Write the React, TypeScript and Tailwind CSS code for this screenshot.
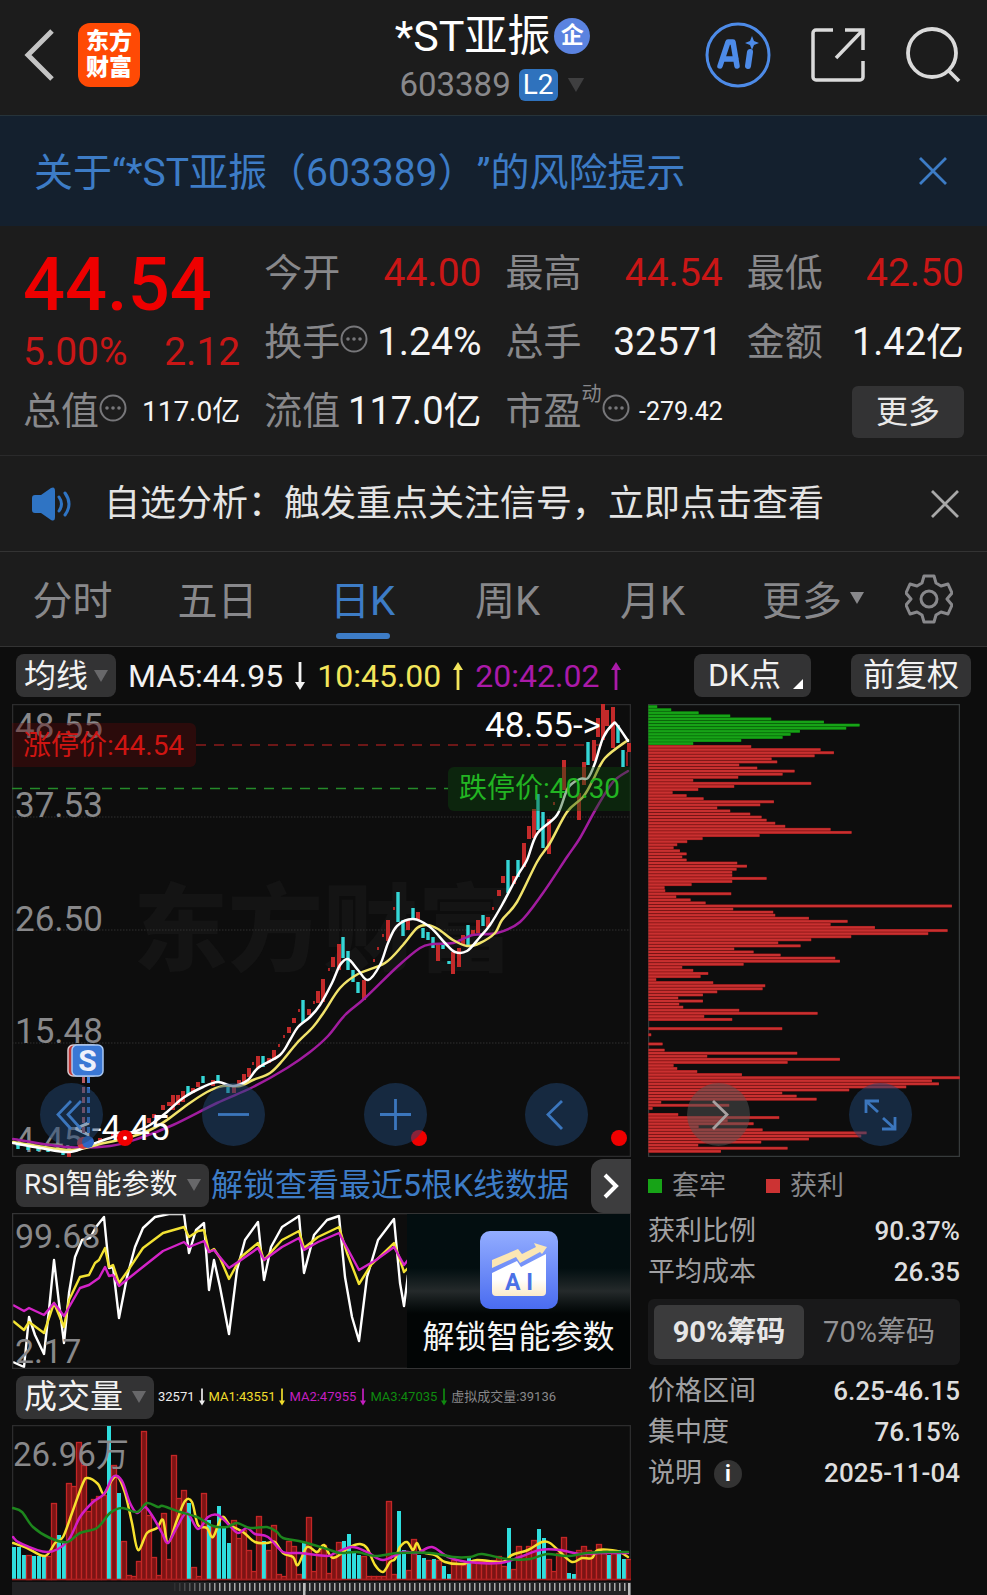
import type { ReactNode } from "react";

type Point = [number, number];

// [x, top, bottom] of every candle, split by direction
const risingCandles = [
  [57, 448, 453], [76, 439, 444], [88, 434, 440], [101, 429, 434], [137, 414, 419], [142, 410, 414],
  [151, 401, 406], [157, 398, 402], [161, 391, 406], [166, 391, 401], [171, 387, 398], [181, 384, 389],
  [186, 378, 383], [201, 376, 382], [222, 383, 389], [227, 376, 382], [232, 370, 381], [237, 364, 373],
  [246, 352, 364], [257, 354, 359], [262, 346, 356], [277, 323, 329], [282, 314, 319], [297, 305, 311],
  [306, 287, 299], [311, 275, 298], [321, 253, 263], [327, 240, 266], [352, 276, 296], [376, 216, 237],
  [396, 216, 226], [406, 208, 216], [426, 239, 257], [441, 248, 270], [447, 244, 263], [451, 231, 241],
  [461, 226, 231], [466, 216, 229], [476, 213, 223], [487, 186, 192], [491, 172, 179], [502, 172, 180],
  [512, 139, 163], [517, 122, 135], [522, 105, 134], [537, 115, 150], [552, 56, 86], [567, 89, 116],
  [572, 58, 81], [582, 36, 57], [586, 14, 33], [591, 0, 36], [595, 6, 22], [601, 3, 44], [617, 39, 48],
];

const fallingCandles = [
  [6, 440, 445], [16, 441, 446], [26, 443, 447], [36, 445, 448], [51, 447, 451], [176, 382, 391],
  [191, 372, 379], [206, 371, 379], [216, 381, 389], [251, 352, 363], [291, 296, 319], [331, 233, 254],
  [336, 247, 266], [341, 266, 278], [346, 278, 289], [386, 188, 218], [391, 216, 232], [401, 204, 216],
  [411, 224, 234], [416, 228, 236], [421, 233, 244], [431, 240, 245], [437, 257, 260], [456, 221, 241],
  [471, 211, 222], [496, 156, 189], [506, 156, 173], [526, 90, 126], [531, 108, 144], [576, 38, 61],
  [606, 21, 39], [611, 46, 63],
];

// one-price days show up as dots
const limitDays: Point[] = [
  [241, 358], [267, 340], [272, 331], [287, 305], [302, 297], [317, 264], [362, 255], [366, 243], [371, 230], [382, 203], [481, 203], [542, 98],
];

const priceMa5: Point[] = [
  [1, 439], [28, 444], [58, 448], [78, 441], [101, 433], [121, 428], [138, 421], [155, 408], [171, 394], [191, 383],
  [206, 378], [221, 382], [236, 376], [246, 364], [268, 351], [278, 336], [286, 323], [298, 313], [308, 301], [320, 279],
  [328, 261], [336, 255], [346, 266], [356, 276], [368, 261], [376, 239], [385, 222], [401, 215], [418, 223], [433, 239],
  [443, 248], [455, 247], [468, 233], [478, 221], [490, 201], [506, 171], [515, 156], [525, 130], [545, 111], [556, 84],
  [568, 75], [576, 74], [583, 59], [591, 34], [601, 20], [605, 21], [616, 37],
];

const priceMa10: Point[] = [
  [1, 438], [58, 446], [88, 440], [115, 434], [138, 426], [155, 416], [175, 401], [195, 388], [211, 382], [228, 382],
  [241, 376], [258, 369], [271, 356], [285, 339], [301, 323], [312, 308], [328, 284], [346, 270], [373, 259], [391, 241],
  [405, 224], [415, 221], [426, 225], [441, 236], [455, 242], [468, 239], [483, 229], [490, 216], [505, 198], [525, 158],
  [538, 139], [555, 108], [571, 93], [581, 76], [593, 54], [616, 36],
];

const priceMa20: Point[] = [
  [1, 435], [55, 443], [98, 442], [128, 434], [161, 421], [205, 399], [241, 383], [275, 364], [298, 348], [316, 332],
  [333, 311], [353, 294], [385, 263], [408, 244], [421, 240], [441, 239], [461, 231], [485, 229], [508, 218], [531, 189],
  [555, 153], [568, 134], [585, 103], [601, 78], [616, 67],
];

const rsiFast: Point[] = [
  [1, 149], [12, 154], [17, 104], [23, 122], [32, 141], [37, 97], [42, 47], [47, 90], [52, 130], [57, 80], [63, 44],
  [70, 27], [78, 25], [84, 14], [92, 4], [97, 55], [101, 54], [107, 105], [115, 64], [123, 34], [131, 15], [143, 4],
  [157, 1], [172, 1], [177, 40], [184, 17], [192, 10], [197, 77], [202, 47], [208, 74], [217, 121], [225, 57], [233, 27],
  [246, 9], [252, 67], [259, 34], [270, 14], [287, 3], [292, 60], [302, 22], [315, 7], [327, 3], [333, 64], [340, 104],
  [347, 128], [355, 64], [366, 27], [382, 6], [388, 70], [392, 93], [396, 62],
];

const rsiMid: Point[] = [
  [1, 108], [12, 117], [17, 109], [32, 120], [42, 90], [52, 114], [57, 87], [68, 64], [77, 62], [83, 50], [87, 47],
  [93, 35], [97, 54], [101, 52], [107, 70], [115, 59], [131, 35], [151, 20], [172, 14], [177, 24], [186, 18], [192, 17],
  [197, 39], [202, 36], [208, 45], [217, 66], [229, 44], [246, 30], [252, 47], [270, 27], [287, 18], [292, 35], [306, 24],
  [327, 14], [335, 40], [347, 71], [359, 52], [382, 30], [388, 47], [392, 59], [396, 55],
];

const rsiSlow: Point[] = [
  [1, 92], [12, 98], [17, 95], [32, 102], [42, 90], [52, 103], [68, 75], [77, 72], [87, 65], [93, 54], [97, 63], [101, 62],
  [107, 73], [127, 57], [151, 38], [172, 29], [177, 34], [192, 28], [197, 39], [202, 37], [217, 55], [229, 47], [246, 35],
  [252, 47], [270, 34], [287, 25], [292, 37], [306, 29], [327, 20], [347, 57], [364, 47], [382, 34], [392, 52], [396, 47],
];

// bar heights, negative on a falling day
const volumes = [
  -32, -32, -24, 24, -23, -23, -23, 23, 76, -44, -38, 96, 93, 137, 114, 68, 80, 83, 84, -153, 114, -86, 38, 4, 3,
  18, 148, 64, 22, 4, 66, 20, 124, 81, 89, -76, 12, 3, 86, -59, 53, -73, -51, -36, 59, 41, 49, 29, 8, 63,
  -38, 29, 54, 5, 3, 38, 33, 5, -36, 62, 8, 28, 34, 6, 23, 37, -38, -45, -28, -24, 23, 3, 3, 3, 3,
  78, 5, -68, -29, 9, 40, -24, -21, 19, -20, 19, -13, -5, 19, 16, 14, -21, 18, 18, 18, 18, 19, 23, 13, -51,
  10, 33, 24, 33, 39, -50, -41, 20, 8, 26, 42, -6, -5, 29, 33, 29, 28, 35, 28, -24, 26, -29, -20, 20,
];

const volumeMa1: Point[] = [
  [1, 118], [15, 123], [33, 131], [43, 118], [51, 112], [60, 88], [71, 58], [76, 53], [86, 59], [92, 69], [100, 55],
  [106, 52], [113, 68], [120, 98], [126, 125], [135, 108], [145, 103], [151, 95], [156, 118], [165, 95], [173, 76],
  [180, 77], [186, 100], [195, 103], [201, 112], [210, 92], [218, 100], [231, 107], [243, 117], [255, 118], [263, 117],
  [271, 128], [281, 132], [286, 140], [295, 122], [305, 127], [312, 120], [321, 133], [338, 122], [348, 119], [355, 123],
  [363, 140], [371, 147], [378, 137], [383, 134], [388, 122], [395, 117], [401, 125], [405, 118], [410, 127], [423, 130],
  [433, 137], [451, 139], [465, 135], [490, 137], [500, 130], [516, 125], [530, 117], [538, 118], [548, 127], [560, 137],
  [570, 133], [580, 133], [586, 125], [605, 126], [616, 132],
];

const volumeMa2: Point[] = [
  [1, 112], [8, 118], [35, 127], [55, 117], [68, 92], [81, 77], [92, 69], [100, 53], [105, 51], [111, 58], [118, 78],
  [125, 88], [133, 82], [141, 92], [150, 108], [156, 118], [165, 102], [175, 88], [186, 104], [196, 92], [206, 90],
  [218, 101], [226, 108], [235, 103], [243, 109], [256, 112], [271, 127], [288, 128], [315, 131], [323, 128], [340, 122],
  [355, 127], [371, 135], [391, 127], [405, 128], [420, 122], [436, 132], [455, 137], [488, 138], [508, 132], [528, 125],
  [548, 125], [568, 129], [588, 128], [616, 128],
];

const volumeMa3: Point[] = [
  [1, 83], [10, 87], [21, 102], [38, 113], [55, 117], [68, 108], [85, 103], [98, 88], [110, 83], [125, 87], [135, 78],
  [146, 82], [151, 81], [168, 87], [185, 92], [201, 101], [215, 102], [225, 98], [238, 103], [255, 102], [265, 107],
  [271, 113], [291, 117], [315, 124], [328, 128], [345, 127], [363, 131], [386, 128], [418, 128], [441, 132], [458, 132],
  [470, 129], [495, 134], [518, 134], [535, 129], [555, 131], [575, 128], [595, 127], [616, 127],
];

// chip distribution from the highest price down, in thirds of a pixel
const trappedChips = [26, 68, 150, 245, 368, 526, 633, 593, 454, 426, 402, 278, 134];

const profitChips = [
  308, 516, 556, 498, 369, 386, 272, 326, 438, 402, 269, 134, 488, 257, 149, 72, 114, 165, 376, 335, 206, 245, 305, 339,
  354, 380, 410, 546, 609, 333, 162, 116, 86, 75, 94, 114, 101, 114, 266, 295, 264, 251, 251, 354, 251, 129, 48, 50,
  248, 83, 126, 171, 910, 254, 374, 380, 481, 597, 546, 679, 897, 839, 608, 488, 389, 456, 257, 315, 396, 560, 574, 285,
  101, 134, 179, 156, 23, 194, 350, 342, 206, 163, 89, 163, 92, 104, 272, 507, 167, 251, 0, 0, 401, 0, 8, 0, 0, 42, 0,
  48, 446, 176, 574, 417, 75, 86, 146, 280, 934, 850, 871, 773, 602, 401, 444, 504, 38, 242, 12, 0, 89, 392, 237, 315,
  150, 342, 654, 638, 481, 338, 149, 417, 217,
];

function smooth(points: Point[]) {
  let d = `M${points[0][0]} ${points[0][1]}`;
  for (let i = 0; i < points.length - 1; i++) {
    const p0 = points[i - 1] ?? points[i];
    const p1 = points[i];
    const p2 = points[i + 1];
    const p3 = points[i + 2] ?? p2;
    d += `C${p1[0] + (p2[0] - p0[0]) / 6} ${p1[1] + (p2[1] - p0[1]) / 6} ${p2[0] - (p3[0] - p1[0]) / 6} ${p2[1] - (p3[1] - p1[1]) / 6} ${p2[0]} ${p2[1]}`;
  }
  return d;
}

function Curve({ points, color }: { points: Point[]; color: string }) {
  return <path d={smooth(points)} fill="none" stroke={color} strokeWidth="2.5" strokeLinecap="round" />;
}

function Line({ points, color }: { points: Point[]; color: string }) {
  return <polyline points={points.join(" ")} fill="none" stroke={color} strokeWidth="2.4" strokeLinejoin="round" />;
}

function Triangle({ className }: { className: string }) {
  return (
    <svg viewBox="0 0 14 12" className={`shrink-0 ${className}`} fill="currentColor" aria-hidden="true">
      <path d="M0 0h14L7 12z" />
    </svg>
  );
}

function CloseIcon({ className }: { className: string }) {
  return (
    <svg viewBox="0 0 28 28" className={className} fill="none" stroke="currentColor" strokeWidth="2.8" aria-hidden="true">
      <path d="M1 1l26 26M27 1L1 27" />
    </svg>
  );
}

function MoreDots() {
  return (
    <svg viewBox="0 0 28 28" className="mb-2 h-7 w-7 shrink-0 text-[#77777a]" aria-hidden="true">
      <circle cx="14" cy="14" r="12.5" fill="none" stroke="currentColor" strokeWidth="2" />
      <g fill="currentColor">
        <circle cx="8" cy="14" r="1.8" />
        <circle cx="14" cy="14" r="1.8" />
        <circle cx="20" cy="14" r="1.8" />
      </g>
    </svg>
  );
}

function Trend({ up = false, className }: { up?: boolean; className: string }) {
  return (
    <svg viewBox="0 0 10 28" className={`shrink-0 ${className}`} fill="currentColor" aria-hidden="true">
      {up ? <path d="M5 0l5 8H6.4v20H3.6V8H0z" /> : <path d="M5 28l5-8H6.4V0H3.6v20H0z" />}
    </svg>
  );
}

function Header() {
  return (
    <header className="grid h-[116px] grid-cols-[1fr_auto_1fr] items-center border-b border-[#26333a] pr-[26px] pl-6">
      <div className="flex items-center gap-6 pb-[6px]">
        <button type="button" aria-label="返回">
          <svg viewBox="0 0 30 52" className="h-[52px] w-[30px]" fill="none" stroke="#c4c4c4" strokeWidth="5" aria-hidden="true">
            <path d="M28 2L4 26l24 24" />
          </svg>
        </button>
        <a href="#home" className="grid h-16 w-[62px] place-content-center rounded-xl bg-[#ff4a05] text-center text-[23px] leading-[26px] font-black text-white">
          <span>东方</span>
          <span>财富</span>
        </a>
      </div>

      <div className="flex flex-col items-center gap-1">
        <h1 className="flex items-center gap-1 text-[43px] leading-[50px] text-white">
          *ST亚振
          <span className="grid h-9 w-9 place-content-center rounded-full bg-[#5b83e0] text-[23px] leading-none font-bold">企</span>
        </h1>
        <div className="flex items-center gap-2 text-[33px] leading-10 text-[#88888b]">
          603389
          <span className="rounded-md bg-[#2f72bd] px-1 text-[28px] leading-8 text-white">L2</span>
          <Triangle className="h-[14px] w-5 text-[#3f3f40]" />
        </div>
      </div>

      <div className="flex items-center justify-end gap-10 pb-[6px]">
        <button type="button" aria-label="AI">
          <svg viewBox="0 0 66 66" className="h-[66px] w-[66px]" fill="none" stroke="#4d8be8" aria-hidden="true">
            <circle cx="33" cy="33" r="31" strokeWidth="3" />
            <path d="M15 44l8-24h5l4 24M19 37h12" strokeWidth="5.5" strokeLinejoin="round" strokeLinecap="round" />
            <path d="M45 30l-2 14" strokeWidth="6" strokeLinecap="round" />
            <path d="M47 14l2 5 5 2-5 2-2 5-2-5-5-2 5-2z" fill="#4d8be8" stroke="none" />
          </svg>
        </button>
        <button type="button" aria-label="分享">
          <svg viewBox="0 0 54 54" className="h-[54px] w-[54px]" fill="none" stroke="#dadada" strokeWidth="3.5" aria-hidden="true">
            <path d="M22 2H5a3 3 0 0 0-3 3v44a3 3 0 0 0 3 3h44a3 3 0 0 0 3-3V33M34 2h18v20M51 3L25 30" />
          </svg>
        </button>
        <button type="button" aria-label="搜索">
          <svg viewBox="0 0 56 56" className="h-14 w-14" fill="none" stroke="#dadada" strokeWidth="3.8" aria-hidden="true">
            <circle cx="27" cy="26" r="24" />
            <path d="M43 43l11 11" />
          </svg>
        </button>
      </div>
    </header>
  );
}

function Quote({ label, value, red = false, icon, size = "text-[39px]" }: { label: ReactNode; value: string; red?: boolean; icon?: ReactNode; size?: string }) {
  return (
    <div className="flex h-[69px] items-center justify-between whitespace-nowrap">
      <dt className="flex items-center text-[38px] text-[#88888b]">
        {label}
        {icon}
      </dt>
      <dd className={`${size} ${red ? "text-[#c91616]" : "text-[#f5f5f5]"}`}>{value}</dd>
    </div>
  );
}

function QuoteBoard() {
  return (
    <section className="border-b border-[#2a2a2b] px-[23px] pt-[13px] pb-[9px]">
      <dl className="grid grid-cols-4 gap-x-6">
        <div className="row-span-2">
          <dt className="pt-2 text-[74px] leading-[76px] font-medium text-[#ee0000]">44.54</dt>
          <dd className="flex justify-between pt-1 text-[39px] leading-[50px] text-[#c91616]">
            <span>5.00%</span>
            <span>2.12</span>
          </dd>
        </div>
        <Quote label="今开" value="44.00" red />
        <Quote label="最高" value="44.54" red />
        <Quote label="最低" value="42.50" red />
        <Quote label="换手" value="1.24%" icon={<MoreDots />} />
        <Quote label="总手" value="32571" />
        <Quote label="金额" value="1.42亿" size="text-[38px]" />
        <Quote label="总值" value="117.0亿" icon={<MoreDots />} size="text-[28px]" />
        <Quote label="流值" value="117.0亿" size="text-[38px]" />
        <Quote label={<>市盈<sup className="top-[-18px] text-[20px] leading-none">动</sup></>} value="-279.42" icon={<MoreDots />} size="text-[25px]" />
        <div className="flex items-center justify-end">
          <button type="button" className="rounded-md bg-[#333334] px-6 text-[32px] leading-[52px] text-[#e8e8e8]">更多</button>
        </div>
      </dl>
    </section>
  );
}

function PeriodTabs() {
  const tabs = ["分时", "五日", "日K", "周K", "月K"];

  return (
    <nav className="grid h-[95px] grid-cols-[repeat(6,minmax(0,1fr))_117px] border-b border-[#333] text-[40px] text-[#88888b]">
      {tabs.map((tab) => (
        <button type="button" key={tab} className={`pt-[6px] ${tab === "日K" ? "relative text-[#3d7cc6]" : ""}`}>
          {tab}
          {tab === "日K" && <span className="absolute bottom-[7px] left-1/2 h-[6px] w-[54px] -translate-x-1/2 rounded-full bg-[#3d7cc6]" />}
        </button>
      ))}
      <button type="button" className="flex items-center justify-end gap-2 pt-[6px] pr-[6px] whitespace-nowrap">
        更多
        <Triangle className="mb-2 h-3 w-[14px]" />
      </button>
      <button type="button" aria-label="设置" className="grid place-content-center">
        <svg viewBox="0 0 48 50" className="h-[50px] w-12" fill="none" stroke="#88888b" strokeWidth="3" strokeLinejoin="round" aria-hidden="true">
          <path d="M19 2h10l2 7 5 3 7-2 4 9-5 6 5 6-4 9-7-2-5 3-2 7H19l-2-7-5-3-7 2-4-9 5-6-5-6 4-9 7 2 5-3z" />
          <circle cx="24" cy="25" r="8" />
        </svg>
      </button>
    </nav>
  );
}

function Picker({ label, value, className }: { label: string; value: string; className: string }) {
  return (
    <label className="relative flex shrink-0 items-center">
      <select aria-label={label} className={`h-[43px] appearance-none rounded-lg bg-[#333334] pl-2 leading-[40px] text-[#f2f2f2] ${className}`}>
        <option>{value}</option>
      </select>
      <Triangle className="pointer-events-none absolute right-2 h-3 w-[14px] text-[#68686a]" />
    </label>
  );
}

function ChartToolbar() {
  return (
    <div className="flex h-[57px] items-center gap-3 px-4 text-[32px] whitespace-nowrap">
      <Picker label="主图指标" value="均线" className="pr-[27px] text-[32px]" />
      <span className="flex items-center gap-3 text-[#f2f2f2]">MA5:44.95<Trend className="h-7 w-[10px]" /></span>
      <span className="flex items-center gap-3 text-[#f3e55b]">10:45.00<Trend up className="h-7 w-[10px]" /></span>
      <span className="flex items-center gap-3 text-[#aa1aa8]">20:42.02<Trend up className="h-7 w-[10px]" /></span>
      <div className="ml-auto flex gap-10 text-[#f2f2f2]">
        <button type="button" className="flex items-end rounded-lg bg-[#333334] pr-2 pl-[14px] leading-[43px]">
          DK点
          <svg viewBox="0 0 10 10" className="mb-2 ml-3 h-[10px] w-[10px]" fill="#fff" aria-hidden="true"><path d="M10 0v10H0z" /></svg>
        </button>
        <button type="button" className="rounded-lg bg-[#333334] px-3 leading-[43px]">前复权</button>
      </div>
    </div>
  );
}

function PriceChart() {
  return (
    <svg viewBox="0 0 619 453" className="block h-auto w-full" role="img" aria-label="日K">
      <text x="121" y="260" className="text-[95px] font-black" fill="#141414">东方财富</text>
      <rect x="0.5" y="0.5" width="618" height="452" fill="none" stroke="#2c2c2d" strokeWidth="1.5" />
      {[113, 226, 339].map((y) => <path key={y} d={`M0 ${y}H619`} stroke="#303031" strokeDasharray="1.5 1.5" />)}

      <g className="text-[35px]" fill="#88888a">
        <text x="3" y="34">48.55</text>
        <text x="3" y="113">37.53</text>
        <text x="3" y="227">26.50</text>
        <text x="3" y="339">15.48</text>
        <text x="3" y="448">4.45</text>
      </g>

      <path d="M184 41H590" stroke="#8c1b1b" strokeWidth="1.6" strokeDasharray="10 8" />
      <path d="M0 84.5H436" stroke="#258a2a" strokeWidth="1.6" strokeDasharray="10 8" />

      {risingCandles.map(([x, top, bottom]) => <rect key={x} x={x - 2} y={top} width="4" height={bottom - top} fill="#c32a2a" />)}
      {fallingCandles.map(([x, top, bottom]) => <rect key={x} x={x - 1.7} y={top} width="3.4" height={bottom - top} fill="#35d6d6" />)}
      {limitDays.map(([x, y]) => <rect key={x} x={x - 1} y={y} width="2" height="3" fill="#b02626" />)}
      <path d="M615 48V62" stroke="#8c1b1b" strokeWidth="2" />

      <Curve points={priceMa20} color="#a11c9f" />
      <Curve points={priceMa10} color="#f1e36b" />
      <Curve points={priceMa5} color="#ffffff" />

      <path d="M0 19H178a6 6 0 0 1 6 6V57a6 6 0 0 1-6 6H0z" fill="#5a0a0a" fillOpacity="0.4" />
      <text x="11" y="51" className="text-[28px]" fill="#cf1512">涨停价:44.54</text>
      <path d="M619 63H442a6 6 0 0 0-6 6v32a6 6 0 0 0 6 6H619z" fill="#0c4a10" fillOpacity="0.4" />
      <text x="447" y="94" className="text-[28px]" fill="#22b522">跌停价:40.30</text>

      <text x="473" y="33" className="text-[35px]" fill="#fff">48.55-&gt;</text>
      <text x="62" y="436" className="text-[35px]" fill="#fff">&lt;-4.45</text>

      <path d="M71.5 373V434" stroke="#b85c60" strokeWidth="3" strokeDasharray="6 4" />
      <path d="M76.5 373V434" stroke="#3f7fd8" strokeWidth="3" strokeDasharray="6 4" />
      <circle cx="71" cy="439" r="6" fill="#d43a3a" />
      <circle cx="76" cy="438" r="6" fill="#2f66c4" />
      <rect x="56" y="341" width="30" height="31" rx="5" fill="#c23634" stroke="#d9c9cf" strokeWidth="1.5" />
      <rect x="60" y="341" width="31" height="31" rx="5" fill="#3a77d4" stroke="#a9c8f2" strokeWidth="1.5" />
      <text x="75.5" y="367" textAnchor="middle" className="text-[30px] font-bold" fill="#eef0fb">S</text>

      <circle cx="113" cy="434" r="8" fill="#f00000" />
      <circle cx="113" cy="434" r="2" fill="#fff" />
      <circle cx="407" cy="434" r="8" fill="#f00000" />
      <circle cx="607" cy="434" r="8" fill="#f00000" />
    </svg>
  );
}

function ChipChart() {
  const pitch = 3.066;
  const all = [...trappedChips, ...profitChips];

  return (
    <svg viewBox="0 0 312 453" className="block h-auto w-full" role="img" aria-label="筹码">
      <rect x="0.5" y="0.5" width="311" height="452" fill="none" stroke="#363a3b" strokeWidth="1.5" />
      {all.map((length, i) => {
        const trapped = i < trappedChips.length;
        const y = 1.2 + i * pitch;
        return (
          <g key={i}>
            <rect x="0.5" y={y} width={length / 3} height={pitch} fill={trapped ? "#0b7a0b" : "#8f1717"} />
            <rect x="0.5" y={y + 0.4} width={length / 3} height="2.2" fill={trapped ? "#17a317" : "#c93030"} />
          </g>
        );
      })}
    </svg>
  );
}

function RoundButton({ label, muted = false, children }: { label: string; muted?: boolean; children: ReactNode }) {
  return (
    <button type="button" aria-label={label} className={`h-[63px] w-[63px] rounded-full ${muted ? "bg-[#555]/50 text-[#a8a0a0]" : "bg-[#1f4674]/50 text-[#3b76bd]"}`}>
      <svg viewBox="0 0 63 63" className="h-full w-full" fill="none" stroke="currentColor" strokeWidth="2.8" aria-hidden="true">{children}</svg>
    </button>
  );
}

function ChartControls() {
  return (
    <div className="absolute right-12 bottom-[11px] left-7 flex justify-between">
      <RoundButton label="最早"><path d="M31 18L18 31.5 31 46M41 18L28 31.5 41 46" /></RoundButton>
      <RoundButton label="缩小"><path d="M16 31.5H47" /></RoundButton>
      <RoundButton label="放大"><path d="M16 31.5H47M31.5 16V47" /></RoundButton>
      <RoundButton label="向左"><path d="M37 18L23 31.5 37 46" /></RoundButton>
      <RoundButton label="向右" muted><path d="M26 18L40 31.5 26 46" /></RoundButton>
      <RoundButton label="全屏"><path d="M17 30V18H30M18 19L29 29M46 34V46H33M34 35L45 45" /></RoundButton>
    </div>
  );
}

function RsiPanel() {
  return (
    <>
      <div className="flex h-14 items-center justify-between pl-1 whitespace-nowrap">
        <Picker label="副图指标" value="RSI智能参数" className="pr-[31px] text-[28px]" />
        <a href="#unlock" className="mr-auto ml-[2px] text-[32px] text-[#3d7cc6]">解锁查看最近5根K线数据</a>
        <button type="button" aria-label="展开" className="grid h-[54px] w-10 place-content-center self-end rounded-l-xl bg-[#3d3d3e]">
          <svg viewBox="0 0 16 26" className="h-[26px] w-4" fill="none" stroke="#fff" strokeWidth="4" aria-hidden="true"><path d="M2 2l11 11L2 24" /></svg>
        </button>
      </div>
      <div className="relative">
        <svg viewBox="0 0 619 156" className="block h-auto w-full" role="img" aria-label="RSI">
          <Line points={rsiFast} color="#ffffff" />
          <Line points={rsiMid} color="#f2e233" />
          <Line points={rsiSlow} color="#d423c8" />
          <text x="3" y="35" className="text-[34px]" fill="#88888a">99.68</text>
          <text x="3" y="150" className="text-[34px]" fill="#88888a">2.17</text>
          <rect x="0.5" y="0.5" width="618" height="155" fill="none" stroke="#343435" strokeWidth="1.5" />
        </svg>
        <button type="button" className="absolute inset-y-[1px] right-[1px] flex w-[36%] flex-col items-center justify-center gap-[6px] bg-linear-to-b from-[#030e10] from-35% via-[#252a2b] via-50% to-[#020505] to-65% pt-2 text-[32px] leading-[44px] whitespace-nowrap text-[#f5f5f5]">
          <svg viewBox="0 0 78 78" className="h-[78px] w-[78px]" aria-hidden="true">
            <defs>
              <linearGradient id="badge" x1="0" y1="0" x2="0" y2="1">
                <stop offset="0" stopColor="#93adff" />
                <stop offset="1" stopColor="#4a6cf0" />
              </linearGradient>
              <linearGradient id="card" x1="0" y1="0" x2="0" y2="1">
                <stop offset="0.6" stopColor="#fff" />
                <stop offset="1" stopColor="#fdebc9" />
              </linearGradient>
            </defs>
            <rect width="78" height="78" rx="10" fill="url(#badge)" />
            <path d="M12 42l25-12 4 6 25-13v38a4 4 0 0 1-4 4H16a4 4 0 0 1-4-4z" fill="url(#card)" />
            <path d="M12 29l26-11 4 5 14-7-2-4 13 4-5 7-2-2-20 11-4-6-24 11z" fill="#fbe6b4" />
            <text x="39" y="59" textAnchor="middle" className="text-[23px] font-bold" fill="#4b70e6">A I</text>
          </svg>
          解锁智能参数
        </button>
      </div>
    </>
  );
}

function VolumePanel() {
  return (
    <>
      <div className="flex h-14 items-center gap-1 pl-1 text-[13px] whitespace-nowrap">
        <Picker label="成交量指标" value="成交量" className="pr-[31px] text-[33px]" />
        <span className="flex items-center gap-1 text-[#ededed]">32571<Trend className="h-5 w-[6px]" /></span>
        <span className="flex items-center gap-1 text-[#f0dd2c]">MA1:43551<Trend className="h-5 w-[6px]" /></span>
        <span className="flex items-center gap-1 text-[#c41fc0]">MA2:47955<Trend className="h-5 w-[6px]" /></span>
        <span className="flex items-center gap-1 text-[#0f8a0f]">MA3:47035<Trend className="h-5 w-[6px]" /></span>
        <span className="text-[#88888a]">虚拟成交量:39136</span>
      </div>
      <svg viewBox="0 0 619 170" className="block h-auto w-full" role="img" aria-label="成交量">
        <path d="M0.5 155V0.5H618.5V155" fill="none" stroke="#2c2c2d" strokeWidth="1.5" />
        {volumes.map((volume, i) =>
          volume < 0 ? (
            <rect key={i} x={i * 5} y={154 + volume} width="4" height={-volume} fill="#2fdede" />
          ) : (
            <rect key={i} x={i * 5 - 0.5} y={154.5 - volume} width="5" height={volume} fill="#7c1414" stroke="#c32626" strokeWidth="1.3" />
          ),
        )}
        <path d="M0 154.5H619" stroke="#a81e1e" strokeWidth="1.5" />
        <text x="1" y="41" className="text-[33px]" fill="#88888a">26.96万</text>
        <Curve points={volumeMa1} color="#f6e02e" />
        <Curve points={volumeMa2} color="#d21dc6" />
        <Curve points={volumeMa3} color="#1d861d" />
        <rect y="157" width="619" height="13" fill="#222224" />
        {Array.from({ length: 91 }, (_, i) => (
          <rect key={i} x={162 + i * 5} y="158" width="1.5" height="8" fill="#aaa" fillOpacity={Math.min(1, (i + 1) / 10)} />
        ))}
        <rect x="291" y="158" width="2.5" height="12" fill="#bbb" />
        <rect x="616" y="158" width="2.5" height="12" fill="#bbb" />
      </svg>
    </>
  );
}

function ChipRow({ label, value }: { label: ReactNode; value: string }) {
  return (
    <div className="flex h-[41px] items-center justify-between whitespace-nowrap">
      <dt className="flex items-center gap-3 text-[#a0a0a2]">{label}</dt>
      <dd className="text-[26px] font-medium text-[#dedede]">{value}</dd>
    </div>
  );
}

function ChipPanel() {
  return (
    <div className="text-[27px]">
      <div className="flex h-[54px] items-center gap-10 pt-1 text-[#88888b]">
        <span className="flex items-center gap-[10px]"><i className="h-[14px] w-[14px] bg-[#17a317]" />套牢</span>
        <span className="flex items-center gap-[10px]"><i className="h-[14px] w-[14px] bg-[#cc3333]" />获利</span>
      </div>
      <dl>
        <ChipRow label="获利比例" value="90.37%" />
        <ChipRow label="平均成本" value="26.35" />
      </dl>
      <div className="my-[6px] grid grid-cols-2 rounded-md bg-[#19191a] p-[6px] text-[29px] leading-[54px] whitespace-nowrap">
        <button type="button" className="rounded-md bg-[#3b3b3c] font-bold text-[#e6e6e6]">90%筹码</button>
        <button type="button" className="text-[#939395]">70%筹码</button>
      </div>
      <dl>
        <ChipRow label="价格区间" value="6.25-46.15" />
        <ChipRow label="集中度" value="76.15%" />
        <ChipRow label={<>说明<span className="grid h-7 w-7 place-content-center rounded-full bg-[#333] text-[22px] leading-none font-bold text-white">i</span></>} value="2025-11-04" />
      </dl>
    </div>
  );
}

export default function App() {
  return (
    <main className="min-h-screen overflow-hidden bg-[#0d0d0d] font-[Roboto,'Noto_Sans_CJK_SC',sans-serif]">
      <div className="bg-[#1c1c1c]">
        <Header />
        <section className="flex h-[110px] items-center justify-between bg-[#14202e] pr-10 pl-[34px] text-[39px] text-[#3d7cc6]">
          <a href="#risk" className="pt-1 [text-spacing-trim:space-all]">关于“*ST亚振（603389）”的风险提示</a>
          <button type="button" aria-label="关闭"><CloseIcon className="h-7 w-7" /></button>
        </section>
        <QuoteBoard />
        <section className="flex h-24 items-center border-b border-[#333] pr-7 pl-8 text-[36px] text-[#e4e4e4]">
          <svg viewBox="0 0 40 34" className="mr-8 h-[34px] w-10 shrink-0" aria-hidden="true">
            <path d="M0 11q0-3 3-3h6L19 1q4-2 4 3v26q0 5-4 3L9 26H3q-3 0-3-3z" fill="#2f74c4" />
            <path d="M27 10q5 7 0 14M33 6q8 11 0 22" fill="none" stroke="#2f74c4" strokeWidth="3" strokeLinecap="round" />
          </svg>
          <a href="#analysis">自选分析：触发重点关注信号，立即点击查看</a>
          <button type="button" aria-label="关闭" className="ml-auto text-[#a8a8a8]"><CloseIcon className="h-7 w-7" /></button>
        </section>
        <PeriodTabs />
      </div>

      <ChartToolbar />
      <div className="pr-[27px] pl-3">
        <div className="relative grid grid-cols-[minmax(0,619fr)_minmax(0,312fr)] gap-x-[17px]">
          <PriceChart />
          <ChipChart />
          <ChartControls />
        </div>
        <div className="grid grid-cols-[minmax(0,619fr)_minmax(0,312fr)] gap-x-[17px]">
          <div>
            <RsiPanel />
            <VolumePanel />
          </div>
          <ChipPanel />
        </div>
      </div>
    </main>
  );
}
